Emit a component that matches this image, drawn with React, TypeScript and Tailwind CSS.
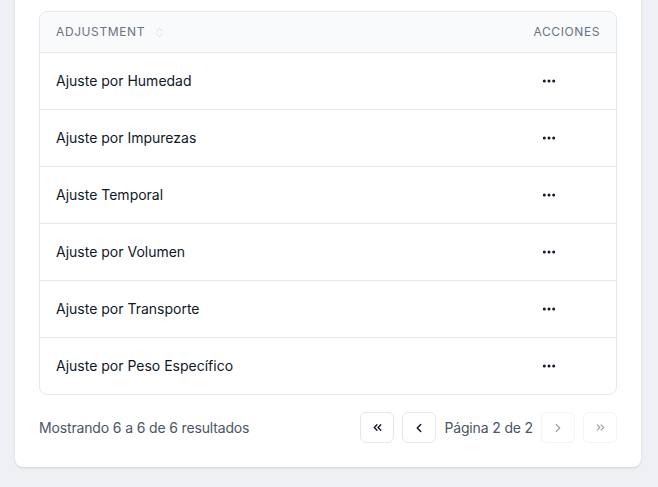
import { ChevronLeft, ChevronRight, ChevronsLeft, ChevronsRight, ChevronsUpDown, Ellipsis } from 'lucide-react';

const rows = [
  'Ajuste por Humedad',
  'Ajuste por Impurezas',
  'Ajuste Temporal',
  'Ajuste por Volumen',
  'Ajuste por Transporte',
  'Ajuste por Peso Específico',
];

const PageButton = ({ children, disabled }: { children: React.ReactNode; disabled?: boolean }) => (
  <button
    disabled={disabled}
    className={`w-[34px] h-[31px] flex items-center justify-center rounded-md border bg-white ${
      disabled ? 'border-gray-100 text-gray-400' : 'border-gray-200 text-gray-900'
    }`}
  >
    {children}
  </button>
);

const App = () => {
  return (
    <div className="min-h-screen bg-[#eef0f3] font-['Inter',sans-serif] pl-[15px] pr-[17px] pb-5">
      <div className="bg-white rounded-b-lg shadow-sm px-6 pt-[11px] pb-6">
        <div className="rounded-lg border border-gray-200 overflow-hidden">
          <table className="w-full">
            <thead>
              <tr className="bg-gray-50 border-b border-gray-200">
                <th className="px-4 py-3 text-left text-xs font-normal uppercase tracking-wider text-gray-500 leading-4">
                  <div className="flex items-center gap-2">
                    Adjustment
                    <ChevronsUpDown size={13} strokeWidth={1.5} className="text-gray-300" />
                  </div>
                </th>
                <th className="px-4 py-3 text-right text-xs font-normal uppercase tracking-wider text-gray-500 leading-4">
                  Acciones
                </th>
              </tr>
            </thead>
            <tbody>
              {rows.map((r, i) => (
                <tr key={r} className={i < rows.length - 1 ? 'border-b border-gray-200' : ''}>
                  <td className="px-4 py-[18px] text-sm leading-5 text-gray-900">{r}</td>
                  <td className="px-4 py-[18px]">
                    <div className="flex justify-end">
                      <button className="mr-[43px] w-4 h-5 flex items-center justify-center text-gray-900">
                        <Ellipsis size={16} strokeWidth={2.5} />
                      </button>
                    </div>
                  </td>
                </tr>
              ))}
            </tbody>
          </table>
        </div>

        <div className="mt-[17px] flex items-center justify-between">
          <span className="text-sm text-gray-600 tracking-[-0.15px]">Mostrando 6 a 6 de 6 resultados</span>
          <div className="flex items-center gap-2">
            <PageButton>
              <ChevronsLeft size={13} strokeWidth={2.5} />
            </PageButton>
            <PageButton>
              <ChevronLeft size={14} strokeWidth={2.5} />
            </PageButton>
            <span className="text-sm text-gray-600 tracking-[-0.15px]">Página 2 de 2</span>
            <PageButton disabled>
              <ChevronRight size={14} strokeWidth={2} />
            </PageButton>
            <PageButton disabled>
              <ChevronsRight size={13} strokeWidth={2} />
            </PageButton>
          </div>
        </div>
      </div>
    </div>
  );
};

export default App;
